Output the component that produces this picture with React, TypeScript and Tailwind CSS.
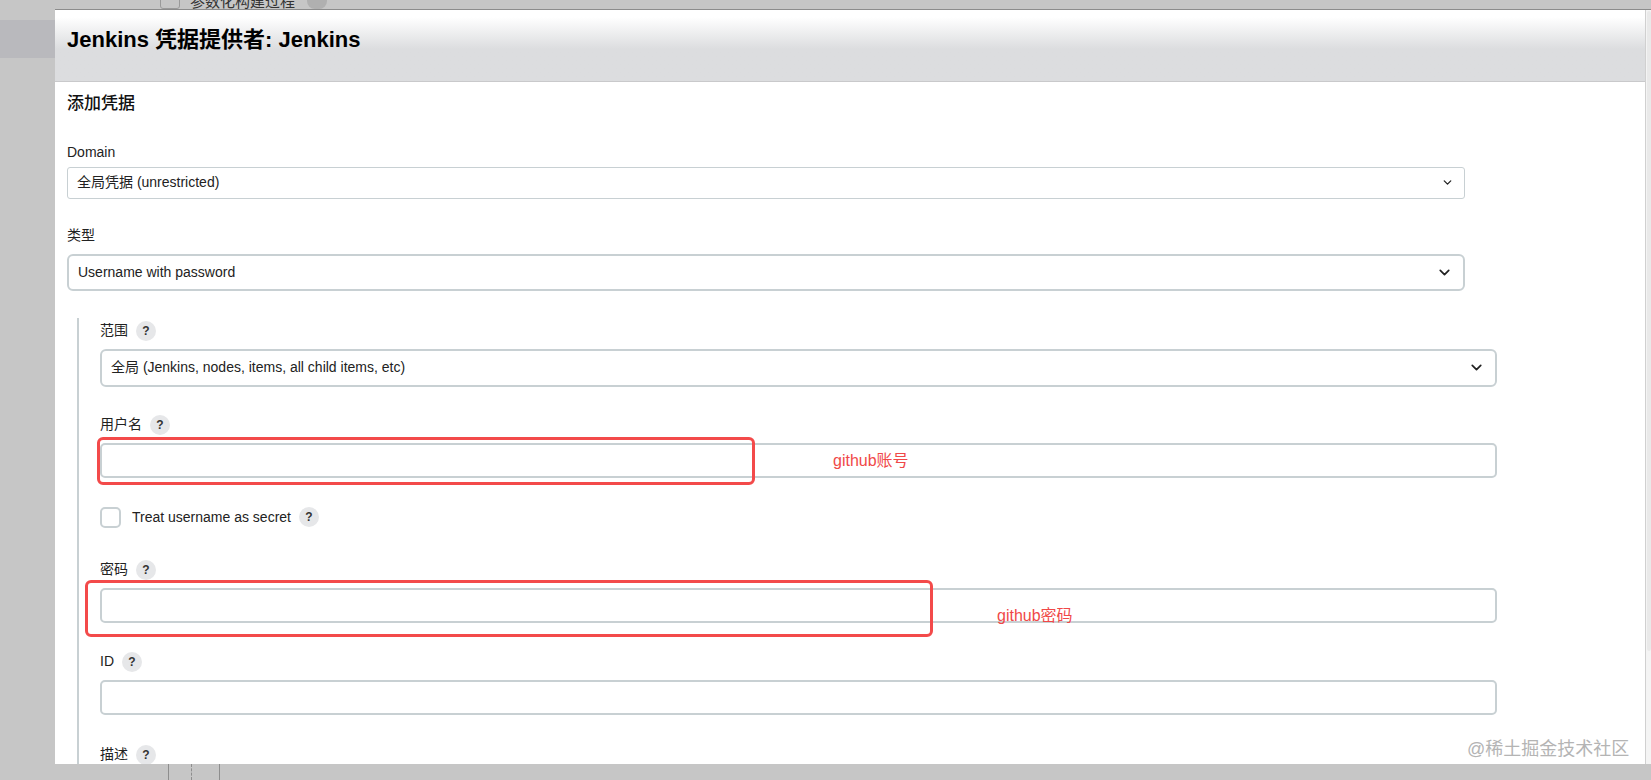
import { ChevronDown } from 'lucide-react';

const FONT = { fontFamily: '"Liberation Sans", Arial, "Noto Sans CJK SC", sans-serif' };

function Help() {
  return (
    <span className="ml-2 inline-flex h-[20px] w-[20px] items-center justify-center rounded-full bg-[#e6e7e9] text-[12px] font-bold text-[#333]">
      ?
    </span>
  );
}

function Label({ text, help = true }: { text: string; help?: boolean }) {
  return (
    <div className="mb-[8px] flex h-[20px] items-center text-[14px] text-[#222]">
      <span>{text}</span>
      {help && <Help />}
    </div>
  );
}

function Select({ value, thick, w, h }: { value: string; thick?: boolean; w: string; h: string }) {
  return (
    <div
      className={`flex items-center justify-between bg-white pl-[9px] pr-[10px] text-[14px] text-[#222] ${w} ${h} ${
        thick ? 'rounded-[6px] border-2 border-[#c8d0d3]' : 'rounded-[3px] border border-[#c8d0d3]'
      }`}
    >
      <span>{value}</span>
      <ChevronDown size={thick ? 17 : 13} strokeWidth={2.4} className="text-[#222]" />
    </div>
  );
}

function Input() {
  return <div className="h-[35px] w-[1397px] rounded-[5px] border-2 border-[#c8d0d3] bg-white" />;
}

export default function App() {
  return (
    <div className="relative h-[780px] w-[1651px] overflow-hidden bg-[#c6c6c6]" style={FONT}>
      {/* page behind the dialog */}
      <div className="flex h-[9px] items-end overflow-hidden">
        <div className="ml-[160px] h-[14px] w-[20px] rounded-[3px] border border-[#9a9a9a]" />
        <span className="ml-[10px] text-[15px] leading-[14px] text-[#333]">参数化构建过程</span>
        <span className="ml-[12px] h-[16px] w-[20px] rounded-full bg-[#b0b0b0]" />
      </div>
      <div className="mt-[11px] h-[38px] w-[55px] bg-[#b9b9bd]" />

      {/* dialog */}
      <div className="absolute left-[55px] top-[9px] flex h-[755px] w-[1596px] border-t border-[#8c8c8c]">
        <div className="flex w-[1590px] flex-col overflow-hidden bg-white">
          <div className="h-[72px] shrink-0 border-b border-[#c9c9cb] bg-gradient-to-b from-white from-[10%] to-[#dcdddf] to-[55%] px-[12px] pt-[13px]">
            <h1 className="text-[22px] font-bold text-black">Jenkins 凭据提供者: Jenkins</h1>
          </div>

          <div className="px-[12px]">
            <h2 className="mt-[9px] text-[17px] font-medium text-[#111]">添加凭据</h2>

            <div className="mt-[26px]">
              <Label text="Domain" help={false} />
            </div>
            <div className="-mt-[4px]">
              <Select value="全局凭据 (unrestricted)" w="w-[1398px]" h="h-[32px]" />
            </div>

            <div className="mt-[27px]">
              <Label text="类型" help={false} />
            </div>
            <Select value="Username with password" thick w="w-[1398px]" h="h-[37px]" />

            <div className="ml-[10px] mt-[27px] border-l-2 border-[#c8d0d3] pb-[20px] pl-[21px] pt-[3px]">
              <Label text="范围" />
              <Select value="全局 (Jenkins, nodes, items, all child items, etc)" thick w="w-[1397px]" h="h-[38px]" />

              <div className="mt-[28px]">
                <Label text="用户名" />
              </div>
              <Input />

              <div className="mt-[29px] flex h-[21px] items-center">
                <span className="h-[21px] w-[21px] rounded-[5px] border-2 border-[#c8d0d3]" />
                <span className="ml-[11px] text-[14px] text-[#222]">Treat username as secret</span>
                <Help />
              </div>

              <div className="mt-[32px]">
                <Label text="密码" />
              </div>
              <Input />

              <div className="mt-[29px]">
                <Label text="ID" />
              </div>
              <Input />

              <div className="mt-[30px]">
                <Label text="描述" />
              </div>
            </div>
          </div>
        </div>
        <div className="flex w-[6px] flex-col border-l border-[#d0d0d0] bg-[#f4f4f4]">
          <div className="ml-[1px] mt-[1px] h-[640px] w-[4px] rounded-full bg-[#e9e9e9]" />
        </div>
      </div>

      {/* bottom strip behind */}
      <div className="absolute left-0 top-[764px] flex h-[16px] w-full">
        <div className="ml-[168px] h-full w-[1px] bg-[#8e8e8e]" />
        <div className="ml-[22px] h-full w-0 border-l border-dashed border-[#8e8e8e]" />
        <div className="ml-[27px] h-full w-[1px] bg-[#8e8e8e]" />
      </div>

      {/* annotations */}
      <div className="absolute left-[97px] top-[437px] h-[48px] w-[658px] rounded-[6px] border-[3px] border-[#f34a4a]" />
      <span className="absolute left-[833px] top-[449px] text-[16px] text-[#f04848]">github账号</span>
      <div className="absolute left-[85px] top-[580px] h-[57px] w-[848px] rounded-[6px] border-[3px] border-[#f34a4a]" />
      <span className="absolute left-[997px] top-[604px] text-[16px] text-[#f04848]">github密码</span>

      <span className="absolute left-[1467px] top-[736px] text-[18px] text-[#b4b4b4]">@稀土掘金技术社区</span>
    </div>
  );
}
